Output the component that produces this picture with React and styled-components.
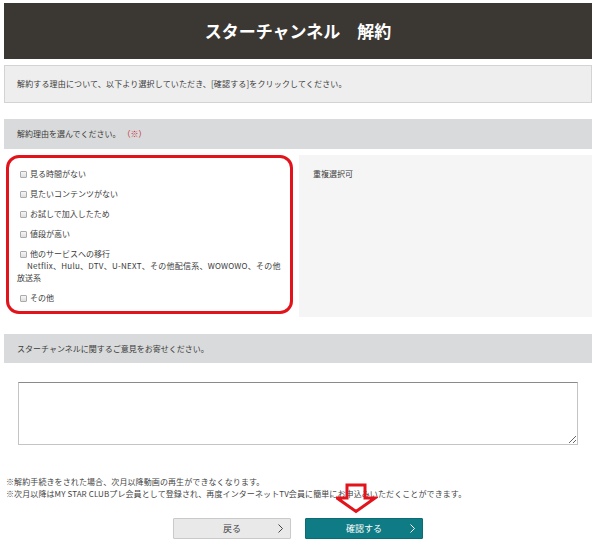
import React from "react";
import styled, { createGlobalStyle } from "styled-components";

const GlobalStyle = createGlobalStyle`
  body {
    margin: 0;
    background: #fff;
    font-family: "Noto Sans CJK JP", "Noto Sans", sans-serif;
    color: #3a3a3a;
  }
`;

const reasons = [
  "見る時間がない",
  "見たいコンテンツがない",
  "お試しで加入したため",
  "値段が高い",
];

const App = () => {
  return (
    <Page>
      <GlobalStyle />
      <Header>
        <Title>スターチャンネル　解約</Title>
      </Header>
      <Info>
        解約する理由について、以下より選択していただき、[確認する]をクリックしてください。
      </Info>
      <SectionHead $top={16}>
        解約理由を選んでください。 <Mark>（※）</Mark>
      </SectionHead>
      <Columns>
        <ReasonBox>
          {reasons.map((r) => (
            <Option key={r}>
              <Check type="checkbox" />
              {r}
            </Option>
          ))}
          <Option>
            <Check type="checkbox" />
            他のサービスへの移行
            <br />
            <Indent>
              Netflix、Hulu、DTV、U-NEXT、その他配信系、WOWOWO、その他
            </Indent>
            <br />
            放送系
          </Option>
          <Option>
            <Check type="checkbox" />
            その他
          </Option>
        </ReasonBox>
        <Hint>重複選択可</Hint>
      </Columns>
      <SectionHead $top={17} $h={29}>
        スターチャンネルに関するご意見をお寄せください。
      </SectionHead>
      <CommentWrap>
        <Comment />
      </CommentWrap>
      <Notes>
        <p>※解約手続きをされた場合、次月以降動画の再生ができなくなります。</p>
        <p>
          ※次月以降はMY STAR CLUBプレ会員として登録され、再度インターネットTV会員に簡単にお申込みいただくことができます。
        </p>
        <Arrow width="42" height="31" viewBox="0 0 42 31">
          <polygon
            points="11,2 29,2 29,15 39,15 20,28.5 1,15 11,15"
            fill="none"
            stroke="#e3131b"
            strokeWidth="3"
          />
        </Arrow>
      </Notes>
      <Buttons>
        <Button>
          戻る
          <Chevron width="5" height="9" viewBox="0 0 5 9">
            <polyline points="0.5,0.5 4.5,4.5 0.5,8.5" fill="none" stroke="currentColor" strokeWidth="1" />
          </Chevron>
        </Button>
        <Button $primary>
          確認する
          <Chevron width="5" height="9" viewBox="0 0 5 9">
            <polyline points="0.5,0.5 4.5,4.5 0.5,8.5" fill="none" stroke="currentColor" strokeWidth="1" />
          </Chevron>
        </Button>
      </Buttons>
    </Page>
  );
};

const Page = styled.div`
  width: 588px;
  margin: 0 4px;
  padding-top: 3px;
  font-size: 8px;
  line-height: 12px;
`;

const Header = styled.div`
  height: 56px;
  background: #3b3834;
  display: flex;
  align-items: center;
  justify-content: center;
`;

const Title = styled.h1`
  margin: 0;
  color: #fff;
  font-size: 17px;
  font-weight: 700;
  line-height: 20px;
`;

const Info = styled.div`
  margin-top: 6px;
  padding: 12px 12px;
  background: #eeeeee;
  border: 1px solid #d3d3d3;
  letter-spacing: 0.15px;
`;

const SectionHead = styled.div`
  margin-top: ${(p) => p.$top}px;
  height: ${(p) => p.$h || 30}px;
  padding: 0 13px;
  box-sizing: border-box;
  background: #d9dadb;
  display: flex;
  align-items: center;
`;

const Mark = styled.span`
  color: #c8242b;
  margin-left: 2px;
`;

const Columns = styled.div`
  margin-top: 6px;
  display: grid;
  grid-template-columns: 291px 293px;
  gap: 4px;
  align-items: start;
`;

const ReasonBox = styled.div`
  margin: 0 2px;
  padding: 10px 6px 7px 8px;
  border: 3px solid #e3131b;
  border-radius: 13px;
  display: flex;
  flex-direction: column;
  gap: 8px;
`;

const Option = styled.label`
  display: block;
`;

const Check = styled.input`
  appearance: none;
  width: 7px;
  height: 7px;
  margin: 0 3px 0 3px;
  vertical-align: -1px;
  border: 1px solid #ababab;
  border-radius: 1px;
  background: linear-gradient(#f6f6f6, #dedede);
  box-sizing: border-box;
`;

const Indent = styled.span`
  padding-left: 10px;
  letter-spacing: 0.25px;
  white-space: nowrap;
`;

const Hint = styled.div`
  min-height: 162px;
  box-sizing: border-box;
  padding: 13px 14px;
  background: #f5f5f5;
`;

const CommentWrap = styled.div`
  margin-top: 19px;
  padding: 0 14px;
`;

const Comment = styled.textarea`
  display: block;
  width: 100%;
  height: 63px;
  box-sizing: border-box;
  border: 1px solid #c4c4c4;
  border-top-color: #8a8a8a;
  border-radius: 0;
  margin: 0;
  resize: both;
`;

const Notes = styled.div`
  position: relative;
  margin-top: 31px;
  padding-left: 2px;
  color: #444;
  letter-spacing: 0.1px;

  p {
    margin: 0;
  }
`;

const Arrow = styled.svg`
  position: absolute;
  left: 332px;
  top: 7px;
`;

const Buttons = styled.div`
  margin-top: 18px;
  display: flex;
  justify-content: center;
  gap: 14px;
`;

const Button = styled.button`
  position: relative;
  width: 118px;
  height: 21px;
  padding: 0;
  font-family: inherit;
  font-size: 9px;
  border-radius: 1px;
  cursor: pointer;
  background: ${(p) => (p.$primary ? "#0f7b84" : "#e9e9e9")};
  color: ${(p) => (p.$primary ? "#fff" : "#444")};
  border: 1px solid ${(p) => (p.$primary ? "#0b6c74" : "#c9c9c9")};
`;

const Chevron = styled.svg`
  position: absolute;
  right: 7px;
  top: 5px;
`;

export default App;
